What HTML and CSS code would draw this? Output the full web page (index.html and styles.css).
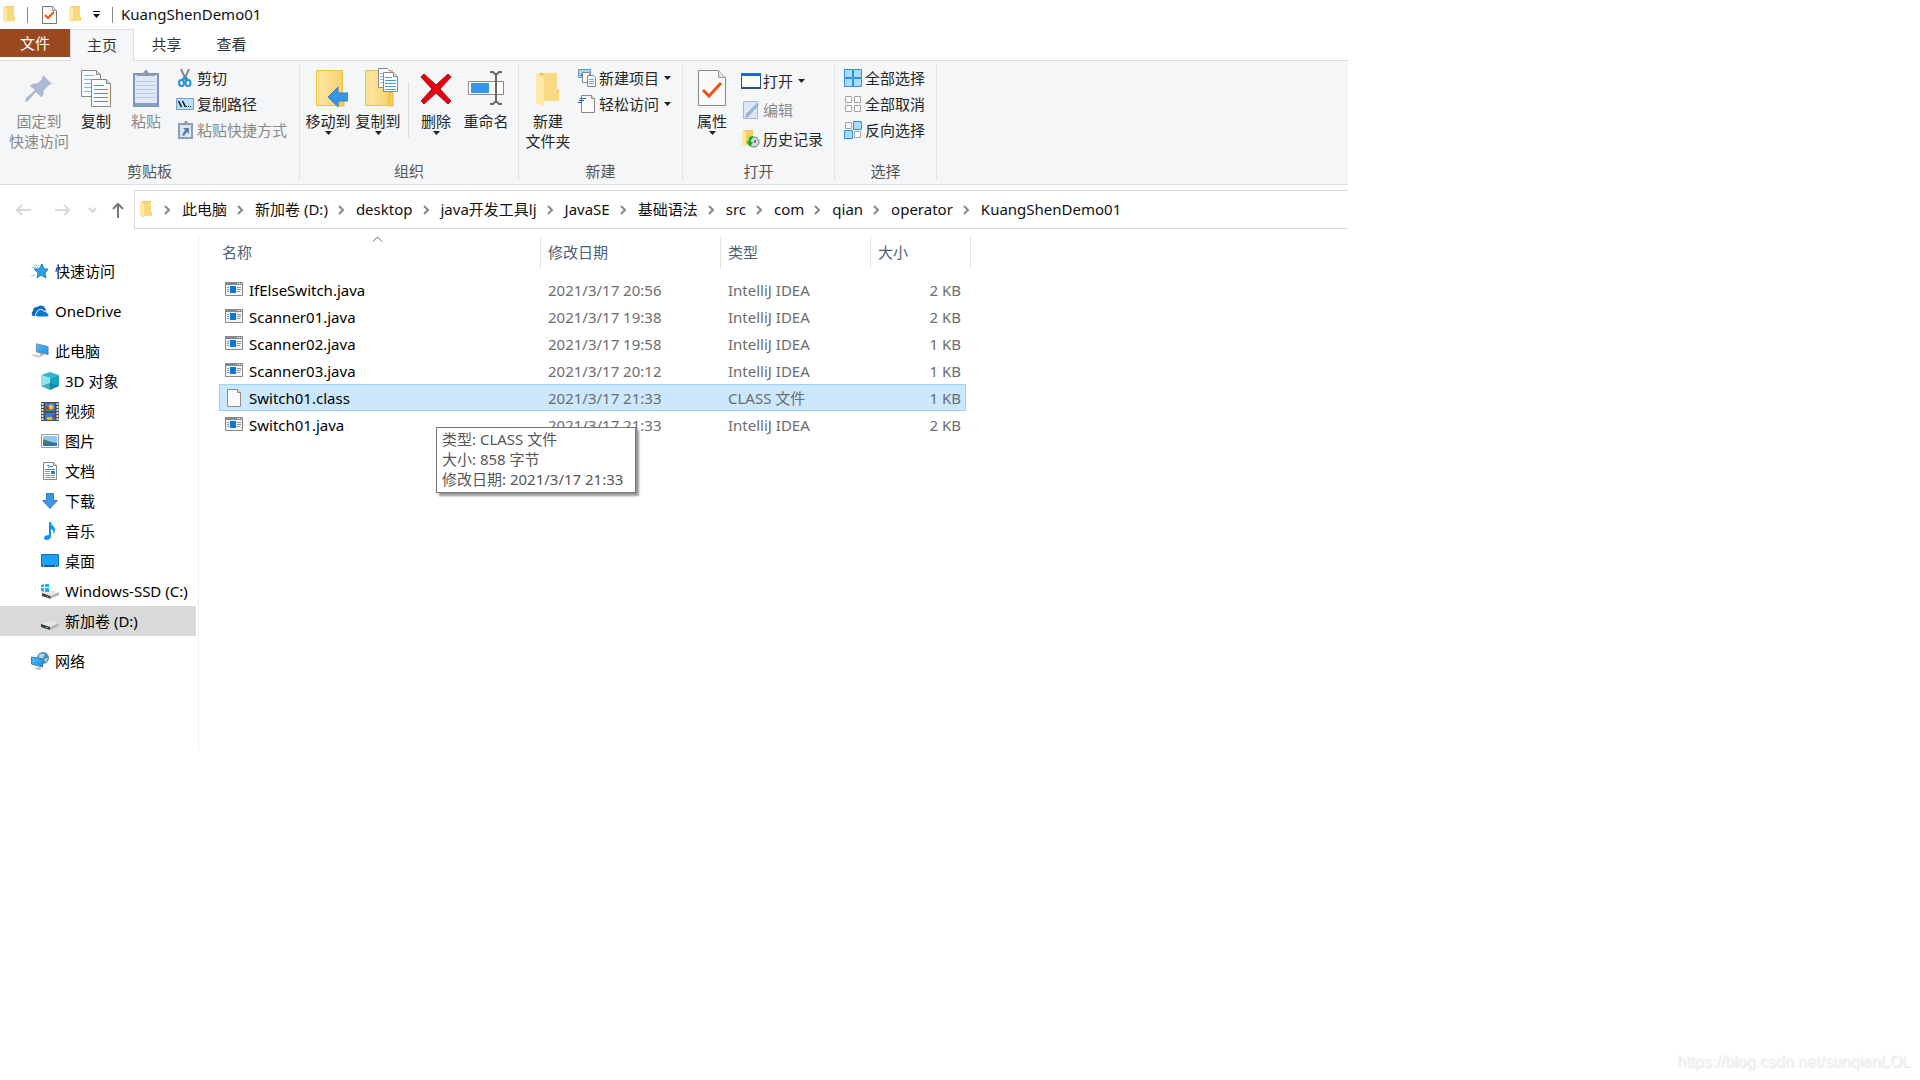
FILE: index.html
```html
<!DOCTYPE html>
<html lang="zh-CN">
<head>
<meta charset="utf-8">
<title>KuangShenDemo01</title>
<link rel="stylesheet" href="styles.css">
</head>
<body>
<svg class="defs" width="0" height="0" aria-hidden="true">
  <defs>
    <linearGradient id="gold" x1="0" x2="1"><stop offset="0" stop-color="#ffe9a8"/><stop offset="1" stop-color="#f5cf6a"/></linearGradient>
    <linearGradient id="sky" x1="0" y1="0" x2="1" y2="1"><stop offset="0" stop-color="#55bdf5"/><stop offset="1" stop-color="#1c8ee0"/></linearGradient>
    <symbol id="folder" viewBox="0 0 12 17"><path d="M2 0h9v11h1v4H3z" fill="#f3cb62"/><path d="M4 1h7v11l1 3H4z" fill="#f8d97c"/><path d="M0 0l4 2v15l-4-2z" fill="#ffe8a3"/></symbol>
    <symbol id="java" viewBox="0 0 18 15"><path d="M.5.5h17v13H.5z" fill="#f4f5f6" stroke="#85898e"/><path d="M0 0h18v3H0z" fill="#85898e"/><path d="M12 1h1v1h-1zM14 1h1v1h-1zM16 1h1v1h-1z" fill="#fff"/><path d="M5 4h6v7H5z" fill="#0a78d7"/><path d="M2 5.500h2M2 7.500h2M2 9.500h2M12 5.500h4M12 7.500h4M12 9.500h3" stroke="#8c9298"/></symbol>
    <symbol id="chev" viewBox="0 0 28 10"><path d="M11 1l4 4-4 4" fill="none" stroke="#888" stroke-width="2"/></symbol>
    <symbol id="caret" viewBox="0 0 7 4"><path d="M0 0h7L3.500 4z" fill="#222"/></symbol>
    <symbol id="disk" viewBox="0 0 18 9"><path d="M0 3l8-3 10 2-9 4z" fill="#e6e6e6"/><path d="M9 6l9-4v3l-9 4z" fill="#b4b4b4"/><path d="M0 3l9 3v3L0 6z" fill="#3a3a3a"/><path d="M5 6h2v1H5z" fill="#45d064"/></symbol>
  </defs>
</svg>
<main class="window">
  <header class="titlebar">
    <svg width="12" height="17"><use href="#folder"/></svg>
    <span class="bar"></span>
    <button class="plain" aria-label="属性"><svg width="15" height="18" viewBox="0 0 15 18"><path d="M.5.5h10l4 4v13H.5z" fill="#fafafa" stroke="#777"/><path d="M10.500.5v4h4" fill="#ddd" stroke="#999"/><path d="M3 9l3 3 6-6" fill="none" stroke="#f0540f" stroke-width="2"/></svg></button>
    <button class="plain" aria-label="新建文件夹"><svg width="12" height="17"><use href="#folder"/></svg></button>
    <button class="plain" aria-label="自定义快速访问工具栏"><svg width="7" height="7" viewBox="0 0 7 7"><path d="M0 0h7v1H0zM0 3h7L3.500 7z" fill="#111"/></svg></button>
    <span class="bar"></span>
    <h1 class="title">KuangShenDemo01</h1>
  </header>

  <nav class="tabs">
    <button class="tab tab-file">文件</button>
    <button class="tab tab-active">主页</button>
    <button class="tab">共享</button>
    <button class="tab">查看</button>
  </nav>

  <section class="ribbon">
    <div class="group">
      <div class="tools clip">
        <button class="big wide" disabled><span class="pic pic-high"><svg width="28" height="28" viewBox="0 0 28 28"><path d="M18 1l9 9-3 1-5 5-1 6-2 1-5-5-8 9-3 1 1-4 9-8-5-4 2-2 6-1 4-4z" fill="#a9bad2"/></svg></span>固定到<br>快速访问</button>
        <button class="big"><span class="pic"><svg width="30" height="37" viewBox="0 0 30 37"><path d="M.5.5h15l4 4v22H.5z" fill="#f9fbff" stroke="#888"/><path d="M15.500.5v4h4" fill="#ddd" stroke="#888"/><path d="M3 5.500h10M3 9.500h13M3 13.500h7M3 17.500h7M3 21.500h7" stroke="#86b5f2"/><path d="M10.500 9.500h15l4 4v23h-19z" fill="#f9fbff" stroke="#888"/><path d="M25.500 9.500v4h4" fill="#ddd" stroke="#888"/><path d="M13 15.500h10M13 19.500h14M13 23.500h14M13 27.500h14M13 31.500h14" stroke="#4c93ea"/></svg></span>复制</button>
        <button class="big" disabled><span class="pic"><svg width="26" height="37" viewBox="0 0 26 37"><path d="M1 4h24v32H1z" fill="#dfe9f6" stroke="#8095bb" stroke-width="2"/><path d="M2 33h22v3H2z" fill="#8c9fc0"/><path d="M4 6V4h5l2-2a2 2 0 014 0l2 2h5v2z" fill="#8d9cb6"/><path d="M3 11.500h20M3 15.500h20M3 19.500h20M3 23.500h20M3 27.500h20" stroke="#b9cde6"/></svg></span>粘贴</button>
        <div class="stack">
          <button class="small"><span class="pic"><svg width="14" height="18" viewBox="0 0 14 18"><path d="M3 0l5 11M11 0L6 11" stroke="#85888c" stroke-width="2"/><ellipse cx="3.500" cy="14" rx="2.500" ry="3" fill="none" stroke="#2690d2" stroke-width="2"/><ellipse cx="10" cy="14" rx="2.500" ry="3" fill="none" stroke="#2690d2" stroke-width="2"/><path d="M4 11l3-3 3 3" fill="none" stroke="#2690d2" stroke-width="2"/></svg></span>剪切</button>
          <button class="small"><span class="pic"><svg width="18" height="12" viewBox="0 0 18 12"><path d="M.5.5h17v11H.5z" fill="#b3e0fb" stroke="#7d9fc0"/><path d="M2.500 3l3 6M6.500 3l3 6" stroke="#111" stroke-width="1.500"/><path d="M10 8h1v1h-1zM12 8h1v1h-1zM14 8h1v1h-1z" fill="#111"/></svg></span>复制路径</button>
          <button class="small" disabled><span class="pic"><svg width="15" height="18" viewBox="0 0 15 18"><path d="M1 3h13v14H1z" fill="#dce7f4" stroke="#8b9dbd" stroke-width="2"/><path d="M4 4V2h2l1-2h2l1 2h2v2z" fill="#8d9cb6"/><path d="M5 7h6v6l-2-2-3 4-2-1 3-5z" fill="#5f7ca9"/></svg></span>粘贴快捷方式</button>
        </div>
      </div>
      <h2 class="group-name">剪贴板</h2>
    </div>

    <div class="group">
      <div class="tools organize">
        <button class="big"><span class="pic pic-right"><svg width="32" height="37" viewBox="0 0 32 37"><path d="M.5.5h26v35H.5z" fill="url(#gold)" stroke="#e9c340"/><path d="M3 1v34" stroke="#f3d36c"/><path d="M23 23h5v13h-5z" fill="#f6cd56" stroke="#e3b93c"/><path d="M12 27l10-10v6h10v8H22v6z" fill="#3497e6" stroke="#3a7fc4"/></svg></span>移动到<svg class="caret" width="7" height="4"><use href="#caret"/></svg></button>
        <button class="big"><span class="pic pic-right"><svg width="34" height="39" viewBox="0 0 34 39"><path d="M.5 2.500h27v35H.5z" fill="url(#gold)" stroke="#e9c340"/><path d="M3 3v34" stroke="#f3d36c"/><path d="M24 26l2-2 2 2v12h-4z" fill="#f6cd56" stroke="#e3b93c"/><path d="M13.500.5h9l4 4v15h-13z" fill="#fff" stroke="#888"/><path d="M15 5.500h3M15 8.500h3M15 11.500h3M15 14.500h3" stroke="#86b5f2"/><path d="M18.500 4.500h10l4 4v15h-14z" fill="#fff" stroke="#888"/><path d="M28.500 4.500v4h4" fill="#ddd" stroke="#888"/><path d="M20 9.500h7M20 12.500h11M20 15.500h11M20 18.500h11M20 21.500h11" stroke="#4c93ea"/></svg></span>复制到<svg class="caret" width="7" height="4"><use href="#caret"/></svg></button>
        <span class="divider"></span>
        <button class="big"><span class="pic pic-mid"><svg width="32" height="32" viewBox="0 0 32 32"><path d="M4 1l12 11L28 1l3 3-11 12 11 12-3 3-12-11L4 31l-3-3 11-12L1 4z" fill="#e40512" stroke="#a80b12"/></svg></span>删除<svg class="caret" width="7" height="4"><use href="#caret"/></svg></button>
        <button class="big"><span class="pic pic-mid"><svg width="36" height="34" viewBox="0 0 36 34"><path d="M.5 10.500h35v13H.5z" fill="#fff" stroke="#888"/><path d="M3 12h18v10H3z" fill="#3498ec"/><path d="M22 1h3l3 3 3-3h3M28 3v28M22 33h3l3-3 3 3h3" fill="none" stroke="#6a6a6a" stroke-width="2"/></svg></span>重命名</button>
      </div>
      <h2 class="group-name">组织</h2>
    </div>

    <div class="group">
      <div class="tools">
        <button class="big"><span class="pic"><svg width="24" height="34" viewBox="0 0 24 34"><path d="M3 0h18v17h2v11H7z" fill="#eec35b"/><path d="M7 0h14v18l2 2v8H7z" fill="#f8da83"/><path d="M0 0l8 4v30l-8-4z" fill="#ffe8a8"/></svg></span>新建<br>文件夹</button>
        <div class="stack">
          <button class="small"><span class="pic"><svg width="18" height="18" viewBox="0 0 18 18"><path d="M.5.5h12v8H.5z" fill="#9fd8f5" stroke="#6a9ab8"/><path d="M2 7l3-4 4 4z" fill="#3c7d7a"/><path d="M4.500 3.500h7v10h-7z" fill="#f8f8f8" stroke="#888"/><path d="M9.500 6.500h6l2 2v9h-8z" fill="#fff" stroke="#888"/><path d="M11 10.500h5M11 12.500h5M11 14.500h5" stroke="#6fa6e4"/></svg></span>新建项目<svg class="arrow" width="7" height="4"><use href="#caret"/></svg></button>
          <button class="small"><span class="pic"><svg width="18" height="18" viewBox="0 0 18 18"><path d="M3.500.5h10l3 3v14h-13z" fill="#fbfbfb" stroke="#888"/><path d="M13.500.5v3h3" fill="#ddd" stroke="#888"/><path d="M2 3.500h6M1 5.500h5M0 7.500h4" stroke="#1468b4"/></svg></span>轻松访问<svg class="arrow" width="7" height="4"><use href="#caret"/></svg></button>
        </div>
      </div>
      <h2 class="group-name">新建</h2>
    </div>

    <div class="group">
      <div class="tools">
        <button class="big"><span class="pic"><svg width="28" height="37" viewBox="0 0 28 37"><path d="M.5.5h20l7 7v28H.5z" fill="#fafafa" stroke="#888"/><path d="M20.500.5v7h7" fill="#e2e2e2" stroke="#999"/><path d="M5 20l6 6 12-13" fill="none" stroke="#ee5412" stroke-width="3"/></svg></span>属性<svg class="caret" width="7" height="4"><use href="#caret"/></svg></button>
        <div class="stack loose">
          <button class="small"><span class="pic"><svg width="20" height="16" viewBox="0 0 20 16"><path d="M.5.5h19v15H.5z" fill="#fdfdf8" stroke="#264f8c"/><path d="M0 0h20v3H0z" fill="#1b6fc6"/><path d="M0 15h20" stroke="#2b4f86" stroke-width="2"/></svg></span>打开<svg class="arrow" width="7" height="4"><use href="#caret"/></svg></button>
          <button class="small" disabled><span class="pic"><svg width="16" height="18" viewBox="0 0 16 18"><path d="M.5.5h14v17H.5z" fill="#dce7f5" stroke="#a7b9d4"/><path d="M14 2l2 2L5 16l-3 1 1-4z" fill="#9cb2d1"/></svg></span>编辑</button>
          <button class="small"><span class="pic"><svg width="18" height="18" viewBox="0 0 18 18"><path d="M1 0h10v15H4z" fill="#f3cb62"/><path d="M0 0l4 2v15l-4-2z" fill="#ffe8a3"/><circle cx="12" cy="12" r="5" fill="#d5d8da" stroke="#777"/><path d="M12 12l2-2M12 12h2" fill="none" stroke="#444"/><path d="M11 6c-4 0-5 3-4 6l-3-1 4 6 3-5H9c0-2 0-3 2-4z" fill="#1aa82b"/></svg></span>历史记录</button>
        </div>
      </div>
      <h2 class="group-name">打开</h2>
    </div>

    <div class="group">
      <div class="tools">
        <div class="stack">
          <button class="small"><span class="pic"><svg width="18" height="18" viewBox="0 0 18 18"><path d="M.5.5h8v8h-8zM9.500.5h8v8h-8zM.5 9.500h8v8h-8zM9.500 9.500h8v8h-8z" fill="#a9dbfa" stroke="#2c8fe0"/></svg></span>全部选择</button>
          <button class="small"><span class="pic"><svg width="18" height="18" viewBox="0 0 18 18"><path d="M1.500 1.500h6v6h-6zM10.500 1.500h6v6h-6zM1.500 10.500h6v6h-6zM10.500 10.500h6v6h-6z" fill="#fafafa" stroke="#a4a4a4"/></svg></span>全部取消</button>
          <button class="small"><span class="pic"><svg width="18" height="18" viewBox="0 0 18 18"><path d="M1.500 1.500h6v6h-6zM10.500 10.500h6v6h-6z" fill="#fafafa" stroke="#a4a4a4"/><path d="M9.500.5h8v8h-8zM.5 9.500h8v8h-8z" fill="#a9dbfa" stroke="#2c8fe0"/></svg></span>反向选择</button>
        </div>
      </div>
      <h2 class="group-name">选择</h2>
    </div>
  </section>

  <section class="location">
    <div class="history">
      <button class="plain" aria-label="后退"><svg width="15" height="12" viewBox="0 0 15 12"><path d="M15 6H1M6 1L1 6l5 5" fill="none" stroke="#dadada" stroke-width="2"/></svg></button>
      <button class="plain" aria-label="前进"><svg width="15" height="12" viewBox="0 0 15 12"><path d="M0 6h14M9 1l5 5-5 5" fill="none" stroke="#dadada" stroke-width="2"/></svg></button>
      <button class="plain" aria-label="最近浏览的位置"><svg width="9" height="6" viewBox="0 0 9 6"><path d="M1 1l3.500 4L8 1" fill="none" stroke="#d8d8d8" stroke-width="2"/></svg></button>
      <button class="plain" aria-label="向上"><svg width="12" height="16" viewBox="0 0 12 16"><path d="M6 16V2M1 7l5-5 5 5" fill="none" stroke="#777" stroke-width="2"/></svg></button>
    </div>
    <nav class="address" aria-label="地址">
      <svg class="ico-folder" width="12" height="17"><use href="#folder"/></svg>
      <svg width="28" height="10"><use href="#chev"/></svg><a href="#">此电脑</a>
      <svg width="28" height="10"><use href="#chev"/></svg><a href="#">新加卷 (D:)</a>
      <svg width="28" height="10"><use href="#chev"/></svg><a href="#">desktop</a>
      <svg width="28" height="10"><use href="#chev"/></svg><a href="#">java开发工具lj</a>
      <svg width="28" height="10"><use href="#chev"/></svg><a href="#">JavaSE</a>
      <svg width="28" height="10"><use href="#chev"/></svg><a href="#">基础语法</a>
      <svg width="28" height="10"><use href="#chev"/></svg><a href="#">src</a>
      <svg width="28" height="10"><use href="#chev"/></svg><a href="#">com</a>
      <svg width="28" height="10"><use href="#chev"/></svg><a href="#">qian</a>
      <svg width="28" height="10"><use href="#chev"/></svg><a href="#">operator</a>
      <svg width="28" height="10"><use href="#chev"/></svg><a href="#">KuangShenDemo01</a>
    </nav>
  </section>

  <div class="body">
    <nav class="tree" aria-label="导航窗格">
      <a class="node" href="#"><svg width="18" height="16" viewBox="0 0 18 16"><path d="M11 1l2 5h4l-3 4 1 5-5-3-4 3 1-5-4-4h5z" fill="#2ca0ea" stroke="#1d80c6"/><path d="M3 2.500h5M1 4.500h6M0 12.500h4" stroke="#8fcdf4"/></svg>快速访问</a>
      <a class="node spaced" href="#"><svg width="18" height="12" viewBox="0 0 18 12"><path d="M2 11a3 3 0 010-5 4 4 0 014-4 5 5 0 018 1 4 4 0 011 3H8l-3 5z" fill="#0a6cc8"/><path d="M6 12a3 3 0 010-5 4 4 0 017-1 3 3 0 013 2 2 2 0 010 4z" fill="#0a78d7" stroke="#fff"/></svg>OneDrive</a>
      <a class="node spaced" href="#"><svg width="20" height="18" viewBox="0 0 20 18"><path d="M6 1l13 3v9L6 10z" fill="url(#sky)" stroke="#6e8da3"/><path d="M10 11l4 1v2h-4z" fill="#a4abb0"/><path d="M0 14l4-2 9 3-4 2z" fill="#d0d5d9"/></svg>此电脑</a>
      <a class="node child" href="#"><svg width="18" height="18" viewBox="0 0 18 18"><path d="M0 3l9-3 9 3-9 3z" fill="#2cb8ce"/><path d="M0 3l9 3v12l-9-4z" fill="#93e3ea"/><path d="M9 6l9-3v11l-9 4z" fill="#17a3bd"/><path d="M0 14l9-3 9 3-9 4z" fill="#107e98" opacity=".6"/></svg>3D 对象</a>
      <a class="node child" href="#"><svg width="18" height="19" viewBox="0 0 18 19"><path d="M0 0h18v19H0z" fill="#4b4b4b"/><path d="M1.500 1v18M16.500 1v18" stroke="#e4e4e4" stroke-width="2" stroke-dasharray="2 1"/><path d="M4 1h10v8H4zM4 11h10v7H4z" fill="#3a77cf"/><circle cx="10" cy="5" r="2.500" fill="#edc02c"/><path d="M5 5h3v4H5zM12 13h2v3h-2z" fill="#b92c2a"/><path d="M6 15h5v3H6z" fill="#e8b820"/><path d="M5 7h4v2H5z" fill="#2d9c46"/></svg>视频</a>
      <a class="node child" href="#"><svg width="18" height="14" viewBox="0 0 18 14"><path d="M.5.5h17v13H.5z" fill="#fff" stroke="#999"/><path d="M2 2h14v10H2z" fill="#8fc8f2"/><path d="M2 6c3-1 5 2 14 3v1H2z" fill="#4c7f62"/><path d="M2 9h14v3H2z" fill="#2d73ac"/></svg>图片</a>
      <a class="node child" href="#"><svg width="18" height="18" viewBox="0 0 18 18"><path d="M2.500.5h10l3 3v14h-13z" fill="#fff" stroke="#888"/><path d="M12.500.5v3h3" fill="#ddd" stroke="#888"/><path d="M4 13.500h10M4 15.500h10M4 9.500h5M4 11.500h5" stroke="#9a9a9a"/><path d="M4 7.500h10M6 4l2-1v3M9 4.500h3" fill="none" stroke="#2b8cd6"/><path d="M10 9h4v3h-4z" fill="#2b7fbf"/></svg>文档</a>
      <a class="node child" href="#"><svg width="18" height="16" viewBox="0 0 18 16"><path d="M5.500.5h7v7h4L9 15.500 1.500 7.500h4z" fill="#3b97e6" stroke="#2f7fd0"/></svg>下载</a>
      <a class="node child" href="#"><svg width="18" height="18" viewBox="0 0 18 18"><path d="M8 0h2c0 4 4 4 4 8 0 2-1 3-2 4 1-3 0-4-2-5v7c0 2-2 4-4 4s-3-1-3-2c0-2 2-3 5-3z" fill="#1493ee"/></svg>音乐</a>
      <a class="node child" href="#"><svg width="18" height="14" viewBox="0 0 18 14"><path d="M.5.5h17v12H.5z" fill="#1ba0fb" stroke="#1272b4"/><path d="M1 12h16" stroke="#0e5d98" stroke-width="2"/><path d="M2 12h1M14 12h1M16 12h1" stroke="#fff"/></svg>桌面</a>
      <a class="node child" href="#"><svg width="18" height="15" viewBox="0 0 18 15"><use href="#disk" x="1" y="6" width="17" height="9"/><path d="M0 1l3-1v3H0zM4 0h4v3H4zM0 4h3v4L0 7zM4 4h4v4H4z" fill="#12b5f0"/></svg>Windows-SSD (C:)</a>
      <a class="node child current" href="#"><svg class="low" width="18" height="9"><use href="#disk"/></svg>新加卷 (D:)</a>
      <a class="node spaced" href="#"><svg width="18" height="18" viewBox="0 0 18 18"><circle cx="12" cy="6" r="6" fill="#4b93b8"/><path d="M8 3c2-2 4-2 6 0l-2 3-4 1zM13 7l4-1-2 5z" fill="#a8d8e0"/><path d="M.5 5l11 2v8L.5 12z" fill="url(#sky)" stroke="#2c81bd"/><path d="M3 16l5-1 3 2-4 1z" fill="#b9bec2"/></svg>网络</a>
    </nav>

    <section class="files">
      <table class="list">
        <colgroup><col class="c-name"><col class="c-date"><col class="c-type"><col class="c-size"></colgroup>
        <thead><tr>
          <th>名称<svg class="sort" width="11" height="6" viewBox="0 0 11 6"><path d="M1 5.500L5.500 1 10 5.500" fill="none" stroke="#666"/></svg></th>
          <th>修改日期</th><th>类型</th><th>大小</th>
        </tr></thead>
        <tbody>
          <tr><td><span class="file"><svg width="18" height="15"><use href="#java"/></svg>IfElseSwitch.java</span></td><td>2021/3/17 20:56</td><td>IntelliJ IDEA</td><td>2 KB</td></tr>
          <tr><td><span class="file"><svg width="18" height="15"><use href="#java"/></svg>Scanner01.java</span></td><td>2021/3/17 19:38</td><td>IntelliJ IDEA</td><td>2 KB</td></tr>
          <tr><td><span class="file"><svg width="18" height="15"><use href="#java"/></svg>Scanner02.java</span></td><td>2021/3/17 19:58</td><td>IntelliJ IDEA</td><td>1 KB</td></tr>
          <tr><td><span class="file"><svg width="18" height="15"><use href="#java"/></svg>Scanner03.java</span></td><td>2021/3/17 20:12</td><td>IntelliJ IDEA</td><td>1 KB</td></tr>
          <tr class="selected"><td><span class="file"><svg width="18" height="18" viewBox="0 0 18 18"><path d="M2.500.5h10l3 3v14h-13z" fill="#fafafa" stroke="#8c8c8c"/><path d="M12.500.5v3h3" fill="#ddd" stroke="#8c8c8c"/></svg>Switch01.class</span></td><td>2021/3/17 21:33</td><td>CLASS 文件</td><td>1 KB</td></tr>
          <tr><td><span class="file"><svg width="18" height="15"><use href="#java"/></svg>Switch01.java</span></td><td>2021/3/17 21:33</td><td>IntelliJ IDEA</td><td>2 KB</td></tr>
        </tbody>
      </table>
      <div class="tip" role="tooltip">类型: CLASS 文件<br>大小: 858 字节<br>修改日期: 2021/3/17 21:33</div>
    </section>
  </div>
</main>
<footer class="credit"><a href="https://blog.csdn.net/sunqianLOL">https://blog.csdn.net/sunqianLOL</a></footer>
</body>
</html>
```
FILE: styles.css
```css
* { box-sizing: border-box; }

body {
  margin: 0;
  min-height: 100vh;
  display: flex;
  flex-direction: column;
  justify-content: space-between;
  background: #fff;
  color: #111;
  font: 15px/20px "Noto Sans", "Noto Sans CJK SC", sans-serif;
}

.defs { position: absolute; }
svg { display: block; flex: none; }
a { color: inherit; text-decoration: none; }

button {
  margin: 0;
  padding: 0;
  border: 0;
  background: none;
  color: inherit;
  font: inherit;
  white-space: nowrap;
}

h1, h2 { margin: 0; font-size: 15px; font-weight: 400; }

.window { width: 70.2%; min-width: 1180px; }

/* title bar */
.titlebar {
  display: flex;
  align-items: center;
  gap: 12px;
  height: 29px;
  padding-left: 3px;
}
.bar { width: 1px; height: 16px; background: #888; }
.titlebar .bar:first-of-type { margin-right: 2px; }
.title { margin-left: -4px; padding-bottom: 2px; }

/* tabs */
.tabs {
  display: flex;
  height: 32px;
  border-bottom: 1px solid #dadbdc;
}
.tab { width: 65px; height: 31px; padding-bottom: 2px; color: #333; }
.tab-file { width: 70px; height: 28px; padding: 0; background: #99481f; color: #fff; }
.tab-active {
  width: 64px;
  height: 32px;
  border: 1px solid #dadbdc;
  border-bottom: 0;
  background: #f5f6f7;
}

/* ribbon */
.ribbon {
  display: flex;
  padding: 2px 0 3px;
  background: #f5f6f7;
  border-bottom: 1px solid #dadbdc;
  color: #262626;
}
.group {
  display: flex;
  flex-direction: column;
  justify-content: space-between;
  height: 118px;
  border-right: 1px solid #e1e2e3;
}
.group-name { color: #555; text-align: center; }
.tools { display: flex; align-items: flex-start; padding: 0 11px 0 4px; }
.clip { padding: 0 12px 0 7px; }
.organize { padding: 0 7px 0 3px; }

.big { width: 50px; padding-top: 2px; text-align: center; }
.big .pic {
  display: flex;
  justify-content: center;
  align-items: flex-end;
  height: 42px;
  margin-bottom: 4px;
}
.big .pic-mid { padding-bottom: 2px; }
.big .pic-high { padding-bottom: 5px; }
.big .pic-right { padding-left: 8px; }
.wide { width: 64px; }
.caret { margin: 0 auto; }
.divider { width: 1px; height: 56px; margin: 19px 2px 0 5px; background: #dcdddf; }

.stack { display: flex; flex-direction: column; padding: 2px 0 0 4px; }
.small { display: flex; align-items: center; gap: 2px; height: 26px; }
.small .pic { display: flex; justify-content: center; width: 20px; }
.loose { padding-top: 3px; }
.loose .small { height: 29px; }
.arrow { margin-left: 3px; }
button:disabled { color: #888; }

/* location bar */
.location { display: flex; padding-top: 5px; }
.history {
  display: flex;
  align-items: center;
  gap: 18px;
  width: 134px;
  padding-left: 16px;
}
.history .plain:nth-child(2) { margin-left: 6px; }
.history .plain:last-child { margin-left: -3px; }
.address {
  flex: 1;
  display: flex;
  align-items: center;
  height: 39px;
  padding-left: 5px;
  border: 1px solid #d9d9d9;
  border-right: 0;
  white-space: nowrap;
}
.address a { padding-bottom: 2px; }
.ico-folder { margin-right: 2px; }

/* body */
.body { display: flex; padding-top: 7px; }
.tree {
  width: 199px;
  min-height: 514px;
  padding: 20px 2px 0 0;
  border-right: 1px solid #f0f0f0;
}
.node {
  display: flex;
  align-items: center;
  gap: 6px;
  height: 30px;
  padding-left: 31px;
  color: #000;
  white-space: nowrap;
}
.node svg { width: 18px; }
.node .low { margin-top: 8px; }
.child { padding-left: 41px; }
.spaced { margin-top: 10px; }
.current { background: #d9d9d9; }

.files { position: relative; padding-left: 20px; }
.list { width: 747px; table-layout: fixed; border-collapse: separate; border-spacing: 0; }
.c-name { width: 322px; }
.c-date { width: 180px; }
.c-type { width: 150px; }
.list th {
  position: relative;
  height: 33px;
  padding: 0 0 2px 7px;
  border-right: 1px solid #e5e5e5;
  color: #4c607a;
  font-weight: 400;
  text-align: left;
}
.list th:first-child { padding-left: 3px; }
.list th:last-child { border-right: 0; }
.list th:last-child::after {
  content: "";
  position: absolute;
  top: 0;
  right: -5px;
  width: 1px;
  height: 100%;
  background: #e5e5e5;
}
.sort { position: absolute; top: 0; left: 50%; margin-left: -8px; }
.list tbody::before { content: ""; display: block; height: 7px; }
.list td {
  height: 27px;
  padding: 0 0 0 7px;
  border: 1px solid transparent;
  border-width: 1px 0;
  color: #6d6d6d;
  white-space: nowrap;
}
.list td:first-child { border-left-width: 1px; padding-left: 5px; color: #000; }
.list td:last-child { border-right-width: 1px; padding-right: 4px; text-align: right; }
.selected td { background: #cce8ff; border-color: #99d1ff; }
.file { display: flex; align-items: center; gap: 6px; }

.tip {
  position: absolute;
  top: 191px;
  left: 237px;
  padding: 1px 12px 3px 5px;
  border: 1px solid #767676;
  background: #fff;
  box-shadow: 3px 3px 2px #999;
  color: #575757;
  white-space: nowrap;
}

.credit {
  padding: 0 9px 8px;
  color: #f4f4f4;
  font: 16px/20px "Liberation Sans", sans-serif;
  text-align: right;
  text-shadow: 1px 1px 1px #e4e4e4;
}
```
